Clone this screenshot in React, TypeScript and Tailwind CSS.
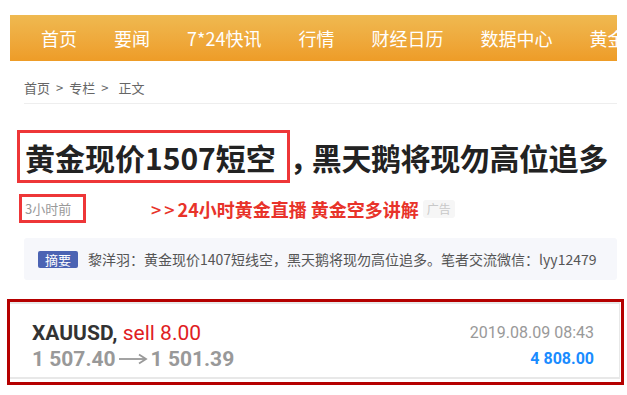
import React from "react";

const cjk = { fontFamily: '"Noto Sans CJK SC", "Noto Sans", sans-serif' };
const roboto = { fontFamily: 'Roboto, "Noto Sans", sans-serif' };

function Arrow() {
  return (
    <svg width="30" height="14" viewBox="0 0 30 14" className="inline-block ml-[2px] mr-[3px] align-[1px]">
      <line x1="1" y1="7" x2="27" y2="7" stroke="#999" strokeWidth="1.8" />
      <path d="M21 2.5 L28 7 L21 11.5" fill="none" stroke="#999" strokeWidth="1.8" />
    </svg>
  );
}

export default function App() {
  const nav = ["首页", "要闻", "7*24快讯", "行情", "财经日历", "数据中心", "黄金"];
  return (
    <div className="w-[627px] h-[395px] bg-white overflow-hidden pt-[15px]" style={cjk}>
      <div className="ml-[10px] w-[607px] h-[46px] overflow-hidden flex items-center gap-[37px] pl-[31px] bg-gradient-to-b from-[#efb950] to-[#ee9c27] text-white text-[18px] leading-none whitespace-nowrap">
        {nav.map((n) => (
          <span key={n} className="shrink-0">{n}</span>
        ))}
      </div>

      <div className="ml-[24px] w-[593px] mt-[17px] pb-[5px] border-b border-[#eeeeee] text-[13px] leading-[20px] text-[#666] flex">
        <span>首页</span>
        <span className="ml-[6px]">&gt;</span>
        <span className="ml-[6px]">专栏</span>
        <span className="ml-[6px]">&gt;</span>
        <span className="ml-[10px]">正文</span>
      </div>

      <div className="mt-[26px] ml-[17px] flex items-center whitespace-nowrap text-[30px] font-bold text-[#222] leading-none">
        <span className="h-[53px] border-[3px] border-[#ee3638] pl-[5px] pr-[11px] flex items-center">黄金现价1507短空</span>
        <span className="tracking-[-8px]">，</span>
        <span className="tracking-[-0.4px]">黑天鹅将现勿高位追多</span>
      </div>

      <div className="mt-[11px] flex items-center whitespace-nowrap">
        <span className="ml-[19px] w-[67px] h-[29px] border-[3px] border-[#ee3638] pl-[3px] flex items-center text-[13px] text-[#999]">3小时前</span>
        <span className="ml-[65px] text-[#e8332a] font-bold text-[18px] leading-none flex items-center">
          <span className="tracking-[3px] mr-[0px] font-medium">&gt;&gt;</span>
          <span>24小时黄金直播 黄金空多讲解</span>
        </span>
        <span className="ml-[4px] h-[18px] px-[4px] bg-[#f6f6f6] rounded-[3px] text-[12px] leading-[18px] text-[#c8c8c8]">广告</span>
      </div>

      <div className="mt-[15px] ml-[24px] w-[593px] h-[42px] bg-[#f6f7fb] rounded-[3px] flex items-center pl-[14px] whitespace-nowrap">
        <span className="w-[40px] h-[17px] bg-[#4b63b3] rounded-[2px] text-white text-[13px] leading-[17px] text-center">摘要</span>
        <span className="ml-[10px] text-[14px] text-[#555]">黎洋羽：黄金现价1407短线空，黑天鹅将现勿高位追多。笔者交流微信：lyy12479</span>
      </div>

      <div className="mt-[19px] ml-[7px] w-[617px] h-[86px] border-[3px] border-[#b50000] pr-[1px] pb-[3px]" style={roboto}>
        <div className="h-full border-t-2 border-b-2 border-r border-[#e8e8e8] flex justify-between pl-[22px] pr-[25px] pt-[16px]">
          <div className="flex flex-col">
            <div className="text-[21px] leading-[26px]">
              <span className="font-bold text-[#333]">XAUUSD,</span>
              <span className="text-[#e0201f]"> sell 8.00</span>
            </div>
            <div className="text-[21px] leading-[26px] font-bold text-[#999] flex items-center">
              <span>1 507.40</span>
              <Arrow />
              <span>1 501.39</span>
            </div>
          </div>
          <div className="flex flex-col items-end">
            <div className="text-[16px] leading-[26px] text-[#999]">2019.08.09 08:43</div>
            <div className="text-[16px] leading-[26px] font-bold text-[#1a8cff]">4 808.00</div>
          </div>
        </div>
      </div>
    </div>
  );
}
